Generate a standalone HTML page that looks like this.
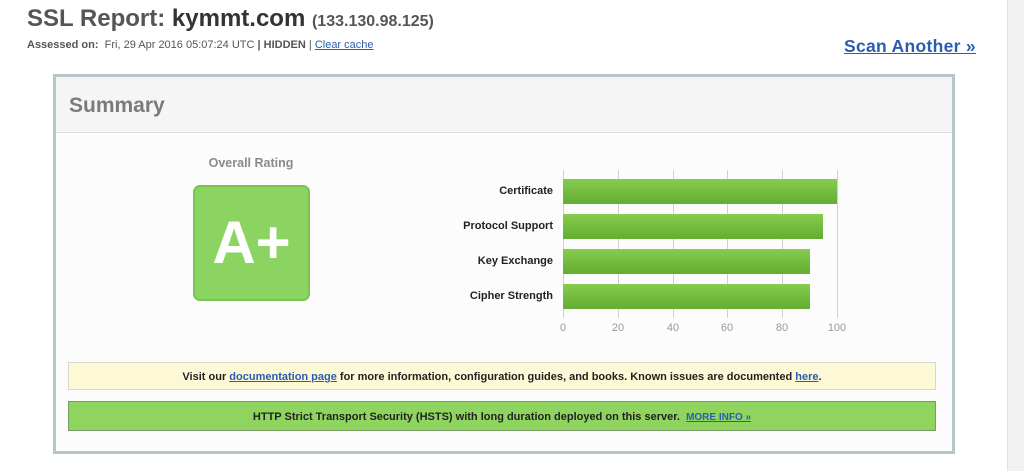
<!DOCTYPE html>
<html><head><style>
body{margin:0;width:1024px;height:471px;background:#fff;font-family:"Liberation Sans",Arial,sans-serif;position:relative;overflow:hidden}
.a{position:absolute}
.side{left:1007px;top:0;width:17px;height:471px;background:#f1f1f1;border-left:1px solid #dde3e4}
h1{position:absolute;left:27px;top:5px;margin:0;font-size:24px;color:#555;font-weight:bold;white-space:nowrap}
h1 b{color:#333}
h1 span{font-size:16px;color:#555}
.as{left:27px;top:39px;font-size:11px;color:#555;white-space:nowrap}
a{color:#2a5db0;text-decoration:underline}
.scan{left:844px;top:36px;font-size:17.5px;font-weight:bold;letter-spacing:0.3px}
.panel{left:53px;top:74px;width:896px;height:374px;border:3px solid #b5c7cb;background:#fcfcfc}
.hd{left:0;top:0;width:896px;height:55px;background:#f5f5f5;border-bottom:1px solid #dcdcdc}
.hd div{position:absolute;left:13px;top:17px;font-size:21px;font-weight:bold;color:#7a7a7a}
.or{left:137px;top:79px;width:116px;text-align:center;font-size:12.5px;font-weight:bold;color:#8a8a8a}
.grade{left:137px;top:108px;width:113px;height:112px;background:#8bd461;border:2px solid #79c54f;border-radius:7px;color:#fff;font-size:60px;font-weight:bold;text-align:center;line-height:112px}
.lab{width:200px;text-align:right;font-size:11px;font-weight:bold;color:#222}
.bar{height:25px;background:linear-gradient(#86cc4e,#63ad32)}
.grid{width:1px;background:#d0d0d0;top:93px;height:148px}
.tick{font-size:11px;color:#999;width:30px;text-align:center;top:245px}
.msg{left:12px;width:868px;height:28px;font-size:11px;font-weight:bold;color:#222;text-align:center;line-height:28px;box-sizing:border-box}
</style></head><body>
<div class="a side"></div>
<h1>SSL Report: <b>kymmt.com</b> <span>(133.130.98.125)</span></h1>
<div class="a as"><b>Assessed on:</b>&nbsp; Fri, 29 Apr 2016 05:07:24 UTC <b>| HIDDEN</b> | <a>Clear cache</a></div>
<a class="a scan">Scan Another »</a>
<div class="a panel">
<div class="a hd"><div>Summary</div></div>
<div class="a or">Overall Rating</div>
<div class="a grade">A+</div>
<div class="a grid" style="left:507px"></div>
<div class="a grid" style="left:562px"></div>
<div class="a grid" style="left:617px"></div>
<div class="a grid" style="left:671px"></div>
<div class="a grid" style="left:726px"></div>
<div class="a grid" style="left:781px"></div>
<div class="a bar" style="left:507px;top:102px;width:274px"></div>
<div class="a bar" style="left:507px;top:137px;width:260px"></div>
<div class="a bar" style="left:507px;top:172px;width:247px"></div>
<div class="a bar" style="left:507px;top:207px;width:247px"></div>
<div class="a lab" style="left:297px;top:108px">Certificate</div>
<div class="a lab" style="left:297px;top:143px">Protocol Support</div>
<div class="a lab" style="left:297px;top:178px">Key Exchange</div>
<div class="a lab" style="left:297px;top:213px">Cipher Strength</div>
<div class="a tick" style="left:492px">0</div>
<div class="a tick" style="left:547px">20</div>
<div class="a tick" style="left:602px">40</div>
<div class="a tick" style="left:656px">60</div>
<div class="a tick" style="left:711px">80</div>
<div class="a tick" style="left:766px">100</div>
<div class="a msg" style="top:285px;background:#fdf8d5;border:1px solid #d8d8c8">Visit our <a>documentation page</a> for more information, configuration guides, and books. Known issues are documented <a>here</a>.</div>
<div class="a msg" style="top:324px;height:30px;line-height:30px;background:#90d460;border:1px solid #7a9a6a">HTTP Strict Transport Security (HSTS) with long duration deployed on this server.&nbsp; <a style="font-size:10px">MORE INFO »</a></div>
</div>
</body></html>
